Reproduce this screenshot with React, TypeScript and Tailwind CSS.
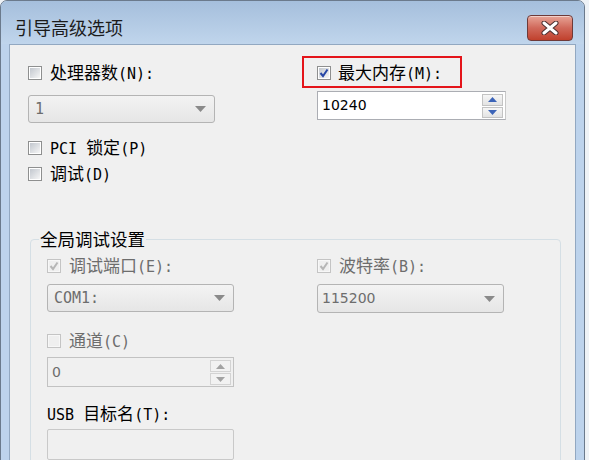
import React from "react";

const CJK = "font-['Noto_Sans_CJK_SC','Noto_Sans',sans-serif]";
const NUM = "font-['DejaVu_Sans','Noto_Sans',sans-serif]";

function L({ children }: { children: React.ReactNode }) {
  return <span className="font-['DejaVu_Sans_Mono',monospace] text-[15px]">{children}</span>;
}

function Check({ checked = false, disabled = false }: { checked?: boolean; disabled?: boolean }) {
  return (
    <span
      className={
        disabled
          ? "relative flex h-[14px] w-[14px] shrink-0 items-center justify-center border border-[#c4c4c4] bg-[#f7f7f7]"
          : "relative flex h-[14px] w-[14px] shrink-0 items-center justify-center border border-[#8e8f8f] bg-white"
      }
    >
      <span
        className={
          disabled
            ? "h-[10px] w-[10px] bg-[#efefef]"
            : "h-[10px] w-[10px] bg-linear-to-br from-[#c2c7ce] to-[#f6f6f6]"
        }
      />
      {checked && (
        <svg className="absolute left-0 top-0" width="12" height="12" viewBox="0 0 12 12">
          <path
            d="M2.5 6 L5 9 L9.5 2.5"
            fill="none"
            stroke={disabled ? "#b6b6b6" : "#2747a6"}
            strokeWidth="2"
          />
        </svg>
      )}
    </span>
  );
}

function DownTri({ color }: { color: string }) {
  return (
    <svg width="11" height="6" viewBox="0 0 11 6">
      <path d="M0 0 H11 L5.5 6 Z" fill={color} />
    </svg>
  );
}

function UpTri({ color }: { color: string }) {
  return (
    <svg width="9" height="5" viewBox="0 0 9 5">
      <path d="M0 5 H9 L4.5 0 Z" fill={color} />
    </svg>
  );
}

function SmallDown({ color }: { color: string }) {
  return (
    <svg width="9" height="5" viewBox="0 0 9 5">
      <path d="M0 0 H9 L4.5 5 Z" fill={color} />
    </svg>
  );
}

export default function App() {
  return (
    <div className="h-[460px] w-[589px] overflow-hidden bg-[#eef2f6]">
      <div className="flex h-[470px] w-[585px] flex-col rounded-t-[7px] border border-[#6b7a8c] bg-[#bdd3ec]">
        {/* title bar */}
        <div className="flex h-[43px] shrink-0 items-start rounded-t-[6px] bg-linear-to-b from-[#a5bfdc] to-[#c0d5ec]">
          <div className={`${CJK} ml-[14px] mt-[15px] text-[18px] leading-[22px] text-[#1b1b1b]`}>
            引导高级选项
          </div>
          <div className="ml-auto mr-[11px] mt-[14px] flex h-[26px] w-[46px] items-center justify-center rounded-[4px] border border-[#6e3a38] bg-linear-to-b from-[#e7a497] via-[#d0685a] to-[#c0402c] shadow-[inset_0_1px_0_rgba(255,255,255,0.5)]">
            <svg width="18" height="14" viewBox="0 0 18 14">
              <path d="M3 2 L15 12 M15 2 L3 12" stroke="#4a2e2e" strokeWidth="5" strokeLinecap="round" />
              <path d="M3 2 L15 12 M15 2 L3 12" stroke="#ffffff" strokeWidth="3" strokeLinecap="round" />
            </svg>
          </div>
        </div>

        {/* body */}
        <div className="flex flex-1">
          <div className="w-[8px] shrink-0" />
          <div className="flex-1 border border-[#92a8c1] bg-[#f0f0f0]">
            <div className={`${CJK} text-[17px] text-black`}>
              {/* row 1 */}
              <div className="mt-[19px] flex h-[18px] items-center pl-[18px]">
                <div className="flex w-[289px] items-center gap-[8px]">
                  <Check />
                  <span className="leading-[18px]">处理器数<L>(N):</L></span>
                </div>
                <div className="relative flex items-center gap-[7px]">
                  <div className="absolute left-[-15px] top-[-7px] h-[32px] w-[160px] border-2 border-[#e4141a]" />
                  <Check checked />
                  <span className="leading-[18px]">最大内存<L>(M):</L></span>
                </div>
              </div>

              {/* row 2 */}
              <div className="mt-[9px] flex items-start pl-[18px]">
                <div className="w-[289px]">
                  <div className="mt-[4px] flex h-[28px] w-[187px] items-center justify-between rounded-[3px] border border-[#b4b4b4] bg-linear-to-b from-[#f3f3f3] to-[#e6e6e6] pl-[6px] pr-[8px]">
                    <span className="font-['DejaVu_Sans_Mono',monospace] text-[15px] text-[#6d6d6d]">1</span>
                    <DownTri color="#8a8a8a" />
                  </div>
                </div>
                <div className="flex h-[29px] w-[189px] border border-[#abadb3] border-r-[#c9c9c9] bg-white">
                  <div className={`${NUM} flex flex-1 items-center pl-[4px] text-[14px] text-black`}>10240</div>
                  <div className="mr-[2px] mt-[1px] flex w-[21px] flex-col gap-[1px] py-[1px]">
                    <div className="flex h-[12px] items-center justify-center border border-[#c3c3c3] bg-linear-to-b from-[#f6f6f6] to-[#e3e3e3]">
                      <UpTri color="#3c64b8" />
                    </div>
                    <div className="flex h-[12px] items-center justify-center border border-[#c3c3c3] bg-linear-to-b from-[#f6f6f6] to-[#e3e3e3]">
                      <SmallDown color="#3c64b8" />
                    </div>
                  </div>
                </div>
              </div>

              {/* PCI */}
              <div className="mt-[16px] flex h-[18px] items-center gap-[8px] pl-[18px]">
                <Check />
                <span className="leading-[18px]"><L>PCI </L>锁定<L>(P)</L></span>
              </div>
              {/* debug */}
              <div className="mt-[8px] flex h-[18px] items-center gap-[8px] pl-[18px]">
                <Check />
                <span className="leading-[18px]">调试<L>(D)</L></span>
              </div>

              {/* group */}
              <fieldset className="ml-[20px] mt-[47px] h-[260px] w-[531px] rounded-[4px] border border-[#d5dfe5] p-0">
                <legend className="ml-[8px] px-[1px] text-[17.5px] leading-[18px] text-black">全局调试设置</legend>

                <div className="mt-[9px] flex h-[18px] items-center pl-[16px] text-[#6d6d6d]">
                  <div className="flex w-[270px] items-center gap-[8px]">
                    <Check checked disabled />
                    <span className="leading-[18px]">调试端口<L>(E):</L></span>
                  </div>
                  <div className="flex items-center gap-[8px]">
                    <Check checked disabled />
                    <span className="leading-[18px]">波特率<L>(B):</L></span>
                  </div>
                </div>

                <div className="mt-[9px] flex pl-[16px]">
                  <div className="w-[270px]">
                    <div className="flex h-[28px] w-[187px] items-center justify-between rounded-[3px] border border-[#b4b4b4] bg-linear-to-b from-[#f3f3f3] to-[#e6e6e6] pl-[6px] pr-[8px]">
                      <span className="font-['DejaVu_Sans_Mono',monospace] text-[15px] text-[#6d6d6d]">COM1:</span>
                      <DownTri color="#8a8a8a" />
                    </div>
                  </div>
                  <div className="flex h-[29px] w-[187px] items-center justify-between rounded-[3px] border border-[#b4b4b4] bg-linear-to-b from-[#f3f3f3] to-[#e6e6e6] pl-[4px] pr-[8px]">
                    <span className={`${NUM} text-[14px] text-[#6d6d6d]`}>115200</span>
                    <DownTri color="#8a8a8a" />
                  </div>
                </div>

                <div className="mt-[19px] flex h-[18px] items-center gap-[8px] pl-[16px] text-[#6d6d6d]">
                  <Check disabled />
                  <span className="leading-[18px]">通道<L>(C)</L></span>
                </div>

                <div className="ml-[16px] mt-[7px] flex h-[30px] w-[187px] border border-[#c2c2c2] bg-[#f0f0f0]">
                  <div className={`${NUM} flex flex-1 items-center pl-[4px] text-[14px] text-[#6d6d6d]`}>0</div>
                  <div className="mr-[2px] mt-[1px] flex w-[21px] flex-col gap-[1px] py-[1px]">
                    <div className="flex h-[12px] items-center justify-center border border-[#d3d3d3] bg-[#f2f2f2]">
                      <UpTri color="#a3a3a3" />
                    </div>
                    <div className="flex h-[12px] items-center justify-center border border-[#d3d3d3] bg-[#f2f2f2]">
                      <SmallDown color="#a3a3a3" />
                    </div>
                  </div>
                </div>

                <div className="mt-[18px] flex h-[18px] items-center pl-[16px]">
                  <span className="leading-[18px]"><L>USB </L>目标名<L>(T):</L></span>
                </div>

                <div className="ml-[16px] mt-[6px] h-[31px] w-[187px] rounded-[2px] border border-[#c9c9c9] bg-[#f0f0f0]" />
              </fieldset>
            </div>
          </div>
          <div className="w-[8px] shrink-0" />
        </div>
      </div>
    </div>
  );
}
